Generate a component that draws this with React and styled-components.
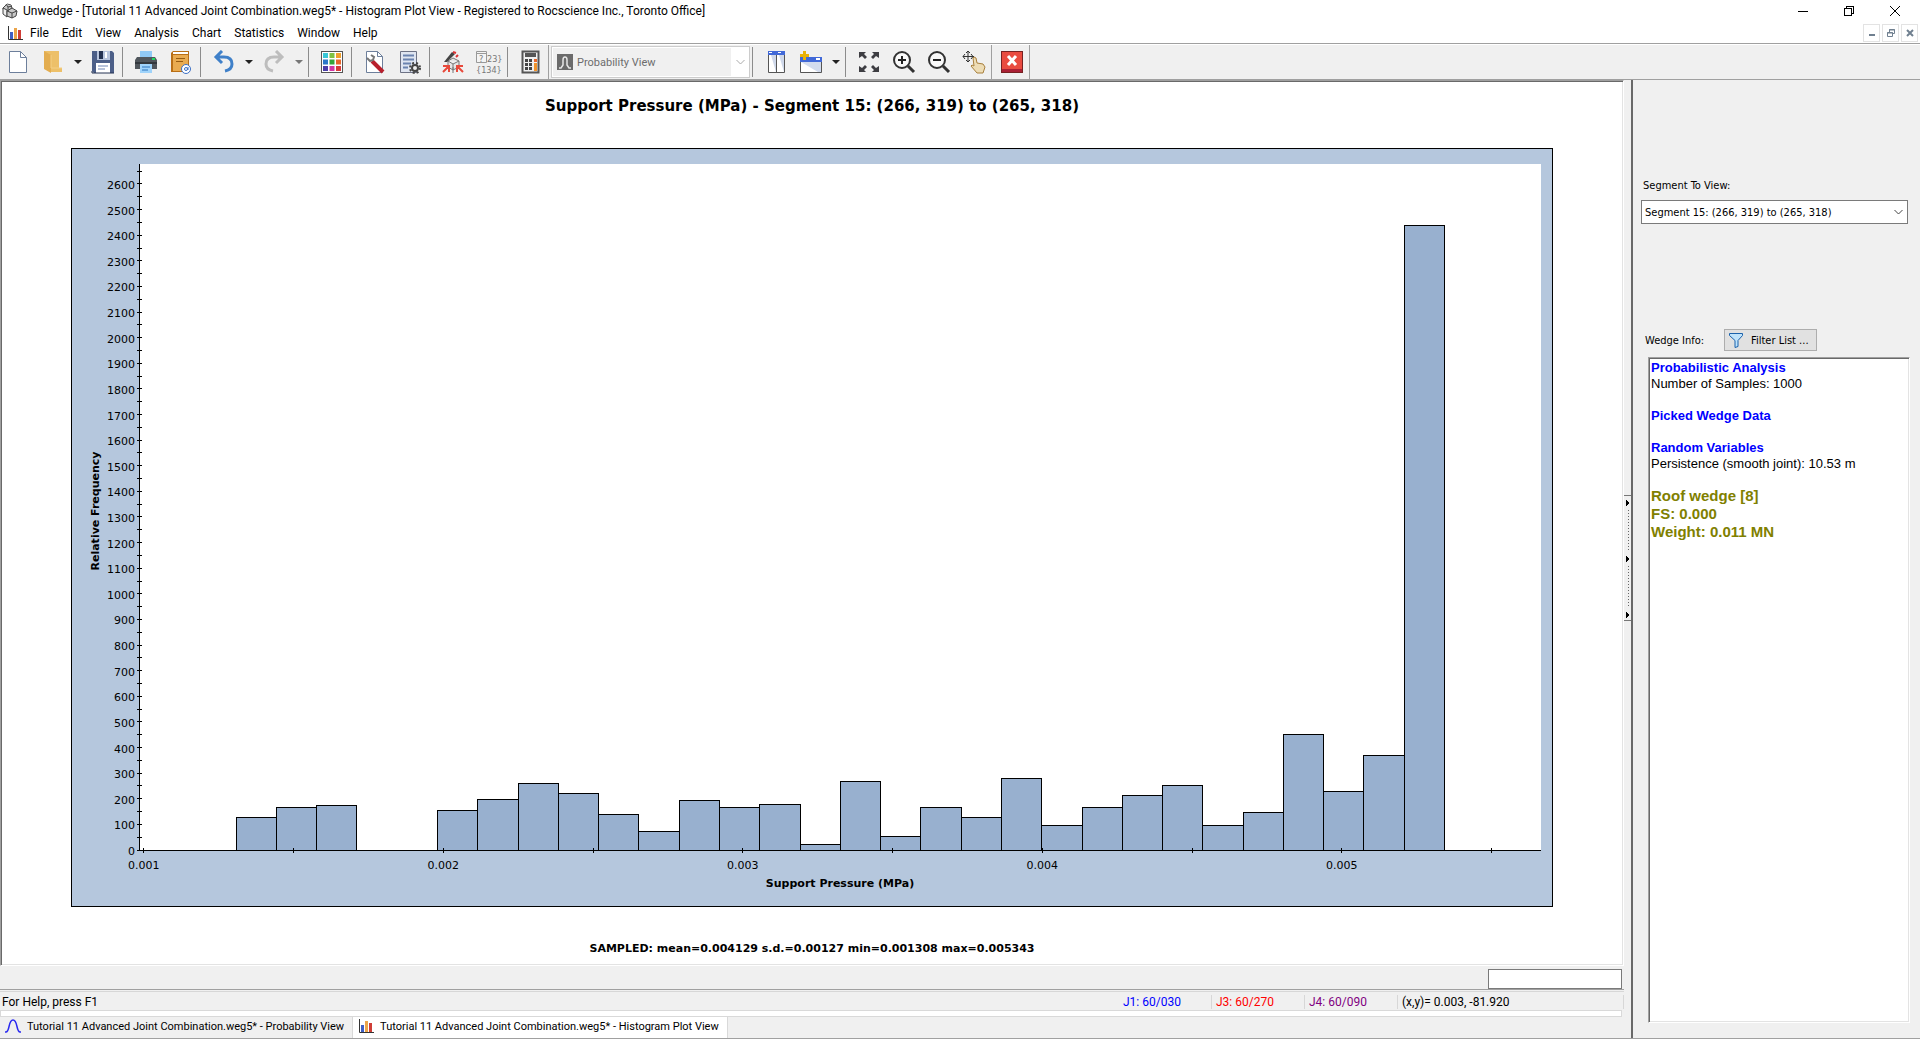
import React from "react";
import styled, { createGlobalStyle, css } from "styled-components";

const MENU = ["File", "Edit", "View", "Analysis", "Chart", "Statistics", "Window", "Help"];

// relative frequency of every bin, from the sampled min to the sampled max
const BINS = [
  125, 164, 172, 0, 0, 156, 199, 261, 222, 140, 74, 195, 164, 179, 23, 269, 51, 164, 125, 281,
  97, 164, 214, 253, 97, 148, 452, 230, 370, 2437
];
const SAMPLE_MIN = 1.308;
const SAMPLE_MAX = 5.343;

const X_MIN = 0.984;
const X_MAX = 5.665;
const Y_MAX = 2678;

const xPct = v => ((v - X_MIN) / (X_MAX - X_MIN)) * 100;
const yPct = v => 100 - (v / Y_MAX) * 100;
const range = (from, to, step) =>
  Array.from({ length: Math.round((to - from) / step) + 1 }, (_, i) => from + i * step);

function Histogram() {
  const binWidth = (SAMPLE_MAX - SAMPLE_MIN) / BINS.length;

  return (
    <Plot role="img" aria-label="Histogram of support pressure">
      <rect width="100%" height="100%" fill="#fff" />
      {/* bars run past the bottom and are clipped at the zero line */}
      <svg width="100%" height="100%" overflow="hidden">
        {BINS.map((value, i) =>
          value ? (
            <Bar
              key={i}
              x={`${xPct(SAMPLE_MIN + i * binWidth)}%`}
              y={`${yPct(value)}%`}
              width={`${xPct(X_MIN + binWidth)}%`}
              height="100%"
            />
          ) : null
        )}
      </svg>
      <Axis x1="0" y1="0" x2="0" y2="100%" />
      <Axis x1="0" y1="100%" x2="100%" y2="100%" />
      {range(0, 2650, 50).map(v => (
        <Tick key={v} y={`${yPct(v)}%`}>
          <Axis x1="-2" y1="0" x2="3" y2="0" />
          {v % 100 === 0 && (
            <TickLabel x="-4" y="5" textAnchor="end">
              {v}
            </TickLabel>
          )}
        </Tick>
      ))}
      {range(1, 5.5, 0.5).map(v => (
        <Tick key={v} x={`${xPct(v)}%`} y="100%">
          <Axis x1="0" y1="-2" x2="0" y2="3" />
          {v % 1 === 0 && (
            <TickLabel y="19" textAnchor="middle">
              {`0.00${v}`}
            </TickLabel>
          )}
        </Tick>
      ))}
      <Tick x="50%" y="100%">
        <AxisTitle y="37" textAnchor="middle">
          Support Pressure (MPa)
        </AxisTitle>
      </Tick>
      <Tick y="50%">
        <AxisTitle x="-4" y="-40" textAnchor="middle" transform="rotate(-90)">
          Relative Frequency
        </AxisTitle>
      </Tick>
    </Plot>
  );
}

function Icon({ size = 24, children }) {
  return (
    <svg width={size} height={size} viewBox={`0 0 ${size} ${size}`} fill="none" aria-hidden="true">
      {children}
    </svg>
  );
}

const AppIcon = () => (
  <Icon size={16}>
    <g stroke="#444" fill="#c9c9c9">
      <path d="M1 5l4-4 4 1 1 3-4 3-4 1z" />
      <path d="M1 5l4 2v7l-4-3z" fill="#eee" />
      <path d="M5 8l5-3 5 3-1 5-4 2-5-2z" />
      <path d="M5 8l5 2 5-2M10 10v5M4 1l2 3 4-1M6 4v4" />
    </g>
  </Icon>
);

const BarsIcon = () => (
  <Icon size={16}>
    <path d="M1.500 1v13.500H16" stroke="#333" />
    <path d="M3 7h3v7H3z" fill="#3f5fc4" />
    <path d="M7 3h3v11H7z" fill="#eba54a" />
    <path d="M11 5h3v9h-3z" fill="#cf3d36" />
  </Icon>
);

const CurveIcon = () => (
  <Icon size={16}>
    <path d="M0 14h1c4 0 2-12 7-12s3 12 7 12h1" stroke="#2a2af0" strokeWidth="1.500" />
  </Icon>
);

const NewIcon = () => (
  <Icon>
    <path d="M3.500 1.500h11l6 6v15h-17z" fill="#fff" stroke="#6d7f9b" />
    <path d="M14.500 1.500v6h6" stroke="#6d7f9b" />
  </Icon>
);

const OpenIcon = () => (
  <Icon>
    <path d="M3 1h15v17h3v4H9L3 18z" fill="#edc069" />
    <path d="M3 1l7 4v18l-7-4z" fill="#e3ad50" />
    <path d="M10 5v13h11" stroke="#f4cf85" />
  </Icon>
);

const SaveIcon = () => (
  <Icon>
    <path d="M1 1h20l2 2v20H3l-2-2z" fill="#4c5f88" />
    <path d="M6 1h13v9H6z" fill="#b9c6de" />
    <path d="M8 1h4v8H8z" fill="#253352" />
    <path d="M14 2h2v6h-2z" fill="#fff" />
    <path d="M5 13h14v10H5z" fill="#fff" />
    <path d="M7 16h10M7 19h7" stroke="#6e86b5" />
    <path d="M1 21v2h22" stroke="#253352" />
  </Icon>
);

const PrintIcon = () => (
  <Icon>
    <path d="M6 1h12v7H6z" fill="#90c9f5" />
    <path d="M3 7h18l2 3v9H1v-9z" fill="#50565c" />
    <path d="M1 12h22v2H1z" fill="#33383d" />
    <path d="M18 8h3v2h-3z" fill="#1ed760" />
    <path d="M6 14h12v9H6z" fill="#9fd3fa" />
    <path d="M8 17h8M8 20h6" stroke="#2d75bd" />
  </Icon>
);

const ReportIcon = () => (
  <Icon>
    <path d="M2 3l2-2h16v21H2z" fill="#b96f16" />
    <path d="M4 2h15v2H4z" fill="#fff" />
    <path d="M4 5h15v16H4z" fill="#e9ab50" />
    <path d="M7 8.500h9M7 11.500h7" stroke="#965b10" />
    <circle cx="17" cy="19" r="4.500" fill="#fff" stroke="#3a6fc5" />
    <circle cx="17" cy="19" r="1.500" stroke="#3a6fc5" />
    <path d="M19 17v3" stroke="#3a6fc5" />
  </Icon>
);

const UndoIcon = () => (
  <Icon>
    <path d="M10 1L4 7l6 6M4 7h8c6 0 8 3 8 7 0 3-2 6-7 7" stroke="#3f80c9" strokeWidth="3" />
  </Icon>
);

const RedoIcon = () => (
  <Icon>
    <path d="M14 1l6 6-6 6M20 7h-8c-6 0-8 3-8 7 0 3 2 6 7 7" stroke="#bdbdbd" strokeWidth="3" />
  </Icon>
);

const TILES = [
  "#38c6d6", "#7fc242", "#f0a02c",
  "#2b77c8", "#36a53a", "#e8662a",
  "#4b3fa8", "#d336a4", "#d83a3a"
];

const PaletteIcon = () => (
  <Icon>
    <path d="M1 1h22v22H1z" fill="#555" />
    <path d="M2 2h20v20H2z" fill="#fff" />
    {TILES.map((fill, i) => (
      <rect key={fill} x={3 + (i % 3) * 6.5} y={3 + Math.floor(i / 3) * 6.5} width="5" height="5" fill={fill} />
    ))}
  </Icon>
);

const OptionsIcon = () => (
  <Icon>
    <path d="M3.500 1.500h11l5 5v16h-16z" fill="#fff" stroke="#6d7f9b" />
    <path d="M14.500 1.500v5h5" stroke="#6d7f9b" />
    <path d="M9 11l11 11" stroke="#b8202c" strokeWidth="4" />
    <path d="M4 8l3 3 3-1 1-3-3-2" stroke="#777" strokeWidth="2" />
  </Icon>
);

const Gear = ({ x, y }) => (
  <g stroke="#444">
    <circle cx={x} cy={y} r="5" strokeWidth="2" strokeDasharray="2 2" />
    <circle cx={x} cy={y} r="3" fill="#eee" strokeWidth="2" />
  </g>
);

const ListIcon = () => (
  <Icon>
    <path d="M2.500 1.500h16v21h-16z" fill="#dfe5f1" stroke="#6d7285" />
    <path d="M5 5.500h11M5 9.500h11M5 13.500h8M5 17.500h5" stroke="#6b83b0" strokeWidth="2" />
    <Gear x={17} y={18} />
  </Icon>
);

const WedgeIcon = () => (
  <Icon>
    <path d="M7 11l5-3 6 3v6l-6 3-5-3zM7 11l5 3 6-3M12 14v6" fill="#e6e6e6" stroke="#777" />
    <path d="M3 12l8-10 3 2-8 8z" fill="#444" />
    <path d="M12 2l3 1M15 7l2-2" stroke="#d33" strokeWidth="2" />
    <path d="M2 16h6v6M8 16l-6 6M22 16h-6v6M16 16l6 6" stroke="#e8493b" strokeWidth="2" />
    <path d="M12 17v6" stroke="#777" />
  </Icon>
);

const CombinationsIcon = () => (
  <Icon size={28}>
    <path d="M2.500 3.500h10v11h-10z" fill="#f4f4f4" stroke="#999" />
    <path d="M3 5.500h9" stroke="#999" />
    <IconText x="5" y="14">?</IconText>
    <IconText x="13" y="14">{"23}"}</IconText>
    <IconText x="2" y="25">{"{134}"}</IconText>
  </Icon>
);

const CalculatorIcon = () => (
  <Icon>
    <path d="M3.500 1.500h16v21h-16z" fill="#f0f0f0" stroke="#555" strokeWidth="2" />
    <path d="M6 3h11v4H6z" fill="#555" />
    <path d="M6 10.500h8M6 14.500h8M6 18.500h8" stroke="#444" strokeWidth="3" strokeDasharray="3 1" />
    <path d="M15 9h3v3h-3z" fill="#e8662a" />
    <path d="M15 13h3v8h-3z" fill="#f0932c" />
  </Icon>
);

const ViewIcon = () => (
  <Icon size={16}>
    <path d="M0 0h16v16H0z" fill="#6b6b6b" />
    <path d="M2 14h2l2-3V6c0-4 4-4 4 0v5l2 3h2" stroke="#e6e6e6" strokeWidth="1.500" />
  </Icon>
);

const TileIcon = () => (
  <Icon>
    <path d="M4.500 1.500h16v21h-16z" fill="#fff" stroke="#555" />
    <path d="M4 1h17v4H4z" fill="#4169d8" />
    <path d="M5 2.500h3M14 2.500h3" stroke="#fff" />
    <path d="M7 5h5v17zM15 5h5v17z" fill="#cfd8ea" />
    <path d="M12.500 5v17" stroke="#555" />
  </Icon>
);

const NewWindowIcon = () => (
  <Icon>
    <path d="M1.500 7.500h21v15h-21z" fill="#d3dcee" stroke="#555" />
    <path d="M2 12l17 10H2z" fill="#fff" />
    <path d="M1 7h22v5H1z" fill="#4169d8" />
    <path d="M17 9h4" stroke="#fff" strokeWidth="2" />
    <path d="M5.500 1v9M1 5.500h9" stroke="#eab308" strokeWidth="3" />
  </Icon>
);

const ExtentsIcon = () => (
  <Icon>
    <g fill="#3d3d42">
      <path d="M2 2h7L7 4l3 3-2 2-3-3-3 2zM22 2h-7l2 2-3 3 2 2 3-3 3 2z" />
      <path d="M2 22h7l-2-2 3-3-2-2-3 3-3-2zM22 22h-7l2-2-3-3 2-2 3 3 3-2z" />
    </g>
  </Icon>
);

const ZoomIcon = ({ plus }) => (
  <Icon>
    <circle cx="10" cy="10" r="8" stroke="#333" strokeWidth="2" fill="#fafafa" />
    <path d={plus ? "M6 10h8M10 6v8" : "M6 10h8"} stroke="#222" strokeWidth="2" />
    <path d="M16 16l6 6" stroke="#333" strokeWidth="3" />
  </Icon>
);

const PanIcon = () => (
  <Icon>
    <path d="M6 1v11M1 6.500h11M4 3l2-2 2 2M4 10l2 2 2-2M3 4L1 6.500 3 9M9 4l2 2.500L9 9" stroke="#333" />
    <path d="M11 8l1-1 2 1 1 5 6 1 2 3-2 6h-6l-6-7 1-1 2 1z" fill="#eddcb5" stroke="#a8803d" />
  </Icon>
);

const CloseViewIcon = () => (
  <Icon>
    <path d="M1 1h22v22H1z" fill="#722" />
    <path d="M2 2h20v20H2z" fill="#e94b40" />
    <path d="M2 19h20v3H2z" fill="#aa2035" />
    <path d="M8 6l8 9M16 6l-8 9" stroke="#fff" strokeWidth="3" />
  </Icon>
);

const FilterIcon = () => (
  <Icon size={16}>
    <path d="M1.500 1.500h13v2L10 8.500v6l-3 1v-7l-5.500-5z" fill="#bfe3fb" stroke="#1b62ac" />
  </Icon>
);

const Arrow = ({ label, disabled }) => (
  <ArrowButton aria-label={label} disabled={disabled}>
    <svg width="8" height="4" aria-hidden="true">
      <path d="M0 0h8L4 4z" fill={disabled ? "#777" : "#222"} />
    </svg>
  </ArrowButton>
);

const Tool = ({ label, children, disabled }) => (
  <ToolButton aria-label={label} title={label} disabled={disabled}>
    {children}
  </ToolButton>
);

function Toolbar() {
  return (
    <ToolbarRow role="toolbar">
      <Tool label="New"><NewIcon /></Tool>
      <Tool label="Open"><OpenIcon /></Tool>
      <Arrow label="Recent files" />
      <Tool label="Save"><SaveIcon /></Tool>
      <Separator />
      <Tool label="Print"><PrintIcon /></Tool>
      <Tool label="Report"><ReportIcon /></Tool>
      <Separator />
      <Tool label="Undo"><UndoIcon /></Tool>
      <Arrow label="Undo list" />
      <Tool label="Redo" disabled><RedoIcon /></Tool>
      <Arrow label="Redo list" disabled />
      <Separator />
      <Tool label="Display options"><PaletteIcon /></Tool>
      <Separator />
      <Tool label="Project settings"><OptionsIcon /></Tool>
      <Tool label="Input data"><ListIcon /></Tool>
      <Separator />
      <Tool label="Pick wedge"><WedgeIcon /></Tool>
      <Tool label="Joint combinations" disabled><CombinationsIcon /></Tool>
      <Separator />
      <Tool label="Compute"><CalculatorIcon /></Tool>
      <Separator $full />
      <ViewPicker>
        <ViewIcon />
        <ViewSelect aria-label="View" disabled defaultValue="p">
          <option value="p">Probability View</option>
        </ViewSelect>
        <ViewChevron>
          <Chevron color="#aaa" />
        </ViewChevron>
      </ViewPicker>
      <Separator />
      <Tool label="Tile windows"><TileIcon /></Tool>
      <Tool label="New window"><NewWindowIcon /></Tool>
      <Arrow label="Window types" />
      <Separator />
      <Tool label="Zoom all"><ExtentsIcon /></Tool>
      <Tool label="Zoom in"><ZoomIcon plus /></Tool>
      <Tool label="Zoom out"><ZoomIcon /></Tool>
      <Tool label="Pan"><PanIcon /></Tool>
      <Separator $full />
      <Tool label="Close view"><CloseViewIcon /></Tool>
      <Separator $full />
    </ToolbarRow>
  );
}

const Chevron = ({ color = "#444" }) => (
  <svg width="9" height="6" viewBox="0 0 9 6" fill="none" aria-hidden="true">
    <path d="M.500 1l4 4 4-4" stroke={color} />
  </svg>
);

function SplitterHandle() {
  return (
    <Handle aria-label="Collapse panel">
      <svg width="7" height="126" shapeRendering="crispEdges" aria-hidden="true">
        <path d="M0 .500h7M0 125.500h7" stroke="#777" />
        {[5, 61, 117].map(y => (
          <path key={y} d={`M2 ${y}v6l3-3z`} fill="#000" />
        ))}
        <path d="M4.500 15v40M4.500 71v40" stroke="#666" strokeDasharray="1 2" />
      </svg>
    </Handle>
  );
}

function SidePanel() {
  return (
    <Side>
      <SegmentLabel htmlFor="segment">Segment To View:</SegmentLabel>
      <SegmentPicker>
        <SegmentSelect id="segment" defaultValue="15">
          <option value="15">Segment 15: (266, 319) to (265, 318)</option>
        </SegmentSelect>
        <Chevron />
      </SegmentPicker>
      <WedgeRow>
        <span>Wedge Info:</span>
        <FilterButton>
          <FilterIcon />
          Filter List ...
        </FilterButton>
      </WedgeRow>
      <InfoBox>
        <InfoHeading>Probabilistic Analysis</InfoHeading>
        <InfoLine>Number of Samples: 1000</InfoLine>
        <InfoHeading $spaced>Picked Wedge Data</InfoHeading>
        <InfoHeading $spaced>Random Variables</InfoHeading>
        <InfoLine>Persistence (smooth joint): 10.53 m</InfoLine>
        <WedgeData>
          Roof wedge [8]
          <br />
          FS: 0.000
          <br />
          Weight: 0.011 MN
        </WedgeData>
      </InfoBox>
    </Side>
  );
}

function App() {
  return (
    <Window>
      <GlobalStyle />
      <TitleBar>
        <AppIcon />
        <WindowTitle>
          Unwedge - [Tutorial 11 Advanced Joint Combination.weg5* - Histogram Plot View - Registered to
          Rocscience Inc., Toronto Office]
        </WindowTitle>
        <WindowButton aria-label="Minimize">
          <svg width="10" height="10" shapeRendering="crispEdges">
            <path d="M0 5.500h10" stroke="#000" />
          </svg>
        </WindowButton>
        <WindowButton aria-label="Restore">
          <svg width="10" height="10" fill="none" stroke="#000" shapeRendering="crispEdges">
            <path d="M.500 2.500h7v7h-7zM2.500 2V.500h7v7H8" />
          </svg>
        </WindowButton>
        <WindowButton aria-label="Close">
          <svg width="10" height="10" stroke="#000">
            <path d="M0 0l10 10M10 0L0 10" />
          </svg>
        </WindowButton>
      </TitleBar>
      <MenuBar>
        <BarsIcon />
        <MenuItems>
          {MENU.map(item => (
            <MenuItem key={item}>{item}</MenuItem>
          ))}
        </MenuItems>
        <MdiButtons>
          <MdiButton aria-label="Minimize view">
            <svg width="8" height="8">
              <path d="M1 6h6" stroke="#708090" strokeWidth="2" />
            </svg>
          </MdiButton>
          <MdiButton aria-label="Restore view">
            <svg width="8" height="8" fill="none" stroke="#708090">
              <path d="M.500 3.500h5v4h-5zM2.500 3V.500h5v4H6M0 4h6M2 1h6" />
            </svg>
          </MdiButton>
          <MdiButton aria-label="Close view window">
            <svg width="8" height="8" stroke="#708090" strokeWidth="2">
              <path d="M1 1l6 6M7 1L1 7" />
            </svg>
          </MdiButton>
        </MdiButtons>
      </MenuBar>
      <Toolbar />
      <Body>
        <Main>
          <View>
            <ChartTitle>Support Pressure (MPa) - Segment 15: (266, 319) to (265, 318)</ChartTitle>
            <ChartPanel>
              <Histogram />
            </ChartPanel>
            <Summary>SAMPLED: mean=0.004129 s.d.=0.00127 min=0.001308 max=0.005343</Summary>
          </View>
          <PromptBar>
            <PromptInput aria-label="Coordinates" />
          </PromptBar>
          <StatusBar>
            <StatusHelp>For Help, press F1</StatusHelp>
            <StatusCell $color="#0000ff">J1: 60/030</StatusCell>
            <StatusCell $color="#ff0000">J3: 60/270</StatusCell>
            <StatusCell $color="#800080">J4: 60/090</StatusCell>
            <StatusCell $wide>(x,y)= 0.003, -81.920</StatusCell>
          </StatusBar>
          <TabStrip />
          <Tabs>
            <Tab>
              <CurveIcon />
              Tutorial 11 Advanced Joint Combination.weg5* - Probability View
            </Tab>
            <Tab $active>
              <BarsIcon />
              Tutorial 11 Advanced Joint Combination.weg5* - Histogram Plot View
            </Tab>
          </Tabs>
        </Main>
        <Splitter>
          <SplitterHandle />
        </Splitter>
        <SidePanel />
      </Body>
    </Window>
  );
}

export default App;

const GlobalStyle = createGlobalStyle`
  * {
    box-sizing: border-box;
  }

  body {
    margin: 0;
    background: #fff;
    color: #000;
    font-family: Roboto, "Open Sans", sans-serif;
    font-size: 12px;
  }

  button, input, select {
    font: inherit;
    color: inherit;
  }
`;

const plainButton = css`
  display: flex;
  align-items: center;
  justify-content: center;
  padding: 0;
  border: 0;
  background: none;
`;

const sunken = css`
  background: #fff;
  border: 1px solid;
  border-color: #a0a0a0 #fff #fff #a0a0a0;
  box-shadow: inset 1px 1px #696969, inset -1px -1px #e3e3e3;
`;

const Window = styled.div`
  display: flex;
  flex-direction: column;
  height: 100vh;
  padding-bottom: 1px;
`;

const TitleBar = styled.header`
  display: flex;
  align-items: center;
  height: 22px;
  padding: 0 2px;
`;

const WindowTitle = styled.span`
  flex: 1;
  padding-left: 5px;
  white-space: nowrap;
`;

const WindowButton = styled.button`
  ${plainButton}
  width: 46px;
  height: 20px;
`;

const MenuBar = styled.nav`
  display: flex;
  align-items: center;
  height: 22px;
  padding: 0 2px 0 7px;
  border-bottom: 1px solid #a0a0a0;
`;

const MenuItems = styled.div`
  display: flex;
  flex: 1;
`;

const MenuItem = styled.button`
  ${plainButton}
  height: 20px;
  padding: 0 6px 0 7px;
`;

const MdiButtons = styled.div`
  display: flex;
  gap: 2px;
`;

const MdiButton = styled.button`
  ${plainButton}
  width: 17px;
  height: 18px;
  border: 1px solid #e3e3e3;
`;

const ToolbarRow = styled.div`
  display: flex;
  align-items: center;
  height: 36px;
  background: #f0f0f0;
  border-top: 1px solid #fff;
  border-bottom: 1px solid #a0a0a0;
`;

const ToolButton = styled.button`
  ${plainButton}
  width: 35px;
  height: 32px;
`;

const ArrowButton = styled.button`
  ${plainButton}
  width: 15px;
  height: 32px;
`;

const Separator = styled.span`
  width: 1px;
  height: ${props => (props.$full ? "34px" : "30px")};
  margin: ${props => (props.$full ? "0 2px 0 0" : "0 5px 0 2px")};
  background: ${props => (props.$full ? "#a0a0a0" : "#8c8c8c")};
`;

const IconText = styled.text`
  fill: #777;
  font-family: "DejaVu Sans Condensed", "DejaVu Sans", sans-serif;
  font-size: 9px;
`;

const ViewPicker = styled.div`
  display: flex;
  align-items: center;
  width: 199px;
  height: 32px;
  padding-left: 5px;
  border: 1px solid #ccc;
  box-shadow: inset 0 0 0 1px #fff;
`;

const ViewSelect = styled.select`
  flex: 1;
  padding: 0 0 0 4px;
  border: 0;
  background: none;
  appearance: none;
  opacity: 1;
  color: #6d6d6d;
  font-size: 11px;
`;

const ViewChevron = styled.span`
  display: flex;
  align-items: center;
  justify-content: center;
  width: 18px;
  height: 30px;
  background: #fff;
`;

const Body = styled.div`
  display: flex;
  flex: 1;
  min-height: 0;
  background: #f0f0f0;
  border-bottom: 1px solid #a0a0a0;
`;

const Main = styled.main`
  display: flex;
  flex: 1;
  flex-direction: column;
  min-width: 0;
`;

const View = styled.section`
  ${sunken}
  display: flex;
  flex: 1;
  flex-direction: column;
  min-height: 0;
  padding: 0 70px;
  font-family: "DejaVu Sans", Verdana, sans-serif;
  font-weight: bold;
  text-align: center;
`;

const ChartTitle = styled.h1`
  height: 67px;
  margin: 0;
  font-size: 15px;
  line-height: 50px;
`;

const ChartPanel = styled.div`
  display: flex;
  flex: 1;
  min-height: 0;
  padding: 15px 11px 56px 67px;
  background: #b5c7dd;
  border: 1px solid #000;
`;

const Summary = styled.p`
  height: 58px;
  margin: 0;
  font-size: 11px;
  line-height: 83px;
`;

const Plot = styled.svg`
  flex: 1;
  min-width: 0;
  height: 100%;
  overflow: visible;
`;

const Bar = styled.rect`
  fill: #98b0cf;
  stroke: #000;
  shape-rendering: crispEdges;
`;

const Axis = styled.line`
  stroke: #000;
  shape-rendering: crispEdges;
`;

const Tick = styled.svg`
  overflow: visible;
`;

const TickLabel = styled.text`
  font-size: 11px;
  font-weight: normal;
`;

const AxisTitle = styled.text`
  font-size: 11px;
`;

const PromptBar = styled.div`
  display: flex;
  justify-content: flex-end;
  height: 24px;
  padding: 3px 2px 0 0;
  border-bottom: 1px solid #a0a0a0;
`;

const PromptInput = styled.input`
  width: 134px;
  height: 20px;
  border: 1px solid #7a7a7a;
  background: #fff;
`;

const StatusBar = styled.footer`
  display: flex;
  align-items: center;
  height: 19px;
  margin-top: 1px;
  padding-top: 2px;
  border-top: 1px solid #d7d7d7;
`;

const StatusHelp = styled.span`
  flex: 1;
  padding-left: 2px;
`;

const StatusCell = styled.span`
  width: ${props => (props.$wide ? "226px" : "93px")};
  padding-left: 4px;
  border-right: 1px solid #d7d7d7;
  color: ${props => props.$color || "#000"};
`;

const TabStrip = styled.div`
  height: 7px;
  margin-right: 2px;
  background: #fff;
  border: 1px solid #d9d9d9;
`;

const Tabs = styled.div`
  display: flex;
  height: 21px;
`;

const Tab = styled.button`
  ${plainButton}
  gap: 6px;
  padding: 0 8px 3px 5px;
  white-space: nowrap;
  font-size: 11px;
  background: ${props => (props.$active ? "#fff" : "#f0f0f0")};
  border-right: 1px solid #d9d9d9;
`;

const Splitter = styled.div`
  display: flex;
  align-items: center;
  width: 7px;
  padding-bottom: 2px;
`;

const Handle = styled.button`
  ${plainButton}
  width: 7px;
`;

const Side = styled.aside`
  display: flex;
  flex-direction: column;
  width: 289px;
  padding: 97px 10px 15px 8px;
  border-left: 2px solid #696969;
  font-family: "DejaVu Sans Condensed", "Noto Sans", sans-serif;
  font-size: 11px;
`;

const SegmentLabel = styled.label`
  padding-left: 2px;
  line-height: 18px;
`;

const SegmentPicker = styled.div`
  display: flex;
  align-items: center;
  height: 24px;
  margin: 5px 2px 0 0;
  padding-right: 4px;
  background: #fff;
  border: 1px solid #7a7a7a;
`;

const SegmentSelect = styled.select`
  flex: 1;
  padding: 0 0 0 3px;
  border: 0;
  background: none;
  appearance: none;
`;

const WedgeRow = styled.div`
  display: flex;
  align-items: center;
  gap: 20px;
  margin-top: 105px;
  padding-left: 4px;
`;

const FilterButton = styled.button`
  display: flex;
  align-items: center;
  gap: 7px;
  width: 93px;
  height: 22px;
  padding: 0 3px;
  border: 1px solid #adadad;
  background: #e1e1e1;
  white-space: nowrap;
`;

const InfoBox = styled.div`
  ${sunken}
  flex: 1;
  margin: 6px 0 0 7px;
  padding: 2px;
  font-family: "Liberation Sans", Arial, sans-serif;
  font-size: 13px;
  line-height: 16px;
`;

const InfoHeading = styled.h2`
  margin: ${props => (props.$spaced ? "16px 0 0" : "0")};
  font-size: 13px;
  color: #0000ff;
`;

const InfoLine = styled.p`
  margin: 0;
`;

const WedgeData = styled.p`
  margin: 15px 0 0;
  color: #808000;
  font-size: 15px;
  font-weight: bold;
  line-height: 18px;
`;
